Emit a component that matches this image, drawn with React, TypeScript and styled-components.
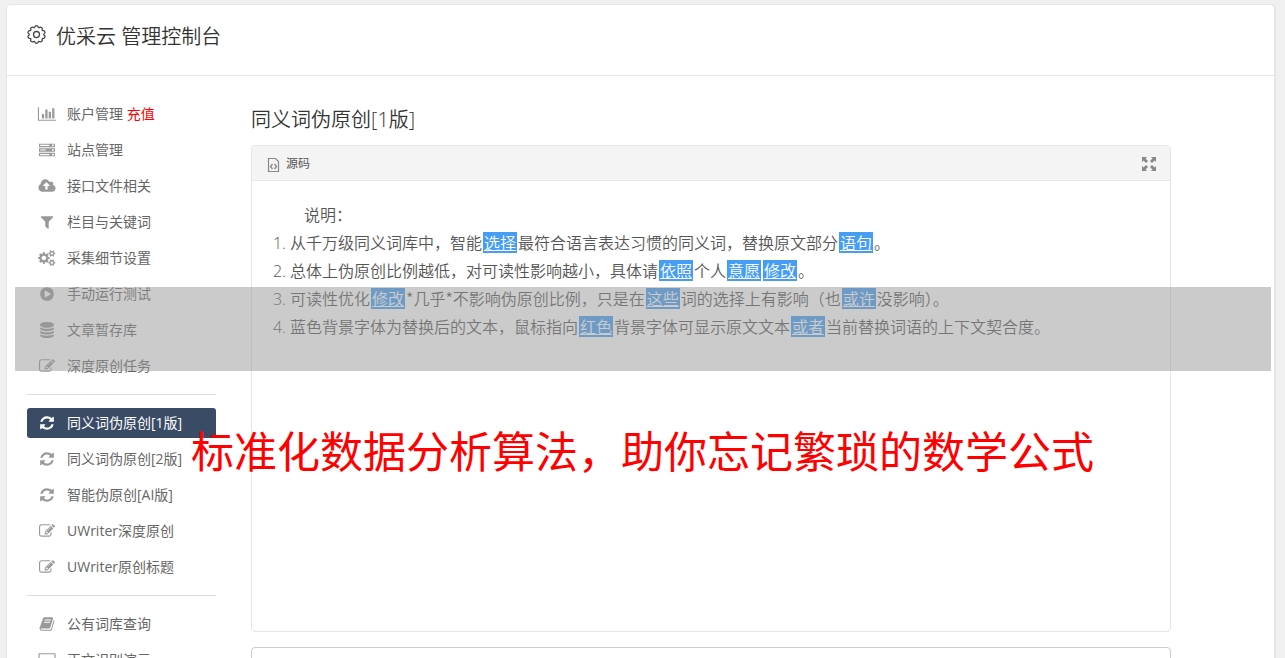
import React from 'react';
import styled, { createGlobalStyle } from 'styled-components';

const latinFirst = '"Open Sans", "Noto Sans CJK SC", sans-serif';
const cjkFirst = '"Noto Sans CJK SC", sans-serif';

const GlobalStyle = createGlobalStyle`
  * { box-sizing: border-box; }
  body {
    margin: 0;
    background: #f0f0f0;
    color: #666;
    font-family: ${latinFirst};
    font-size: 14px;
  }
`;

const Page = styled.div`
  position: relative;
  height: 100vh;
  overflow: hidden;
  padding: 5px 11px 0 7px;
`;

const Card = styled.div`
  min-height: 100vh;
  background: #fff;
  border-radius: 4px;
  box-shadow: 0 0 0 1px #e6e6e6, 1px 0 0 1px #e6e6e6;
`;

const Header = styled.header`
  display: flex;
  align-items: flex-start;
  gap: 10px;
  height: 71px;
  padding: 17px 20px;
  border-bottom: 1px solid #e5e5e5;
  color: #333;
`;

const HeaderIcon = styled.svg`
  width: 19px;
  height: 19px;
  margin-top: 3px;
`;

const Title = styled.h1`
  margin: 0;
  font-size: 20px;
  line-height: 30px;
  font-weight: 350;
`;

const Body = styled.div`
  display: flex;
  gap: 35px;
  padding: 23px 20px 0;
`;

const Sidebar = styled.nav`
  flex: 0 0 189px;
`;

const Divider = styled.hr`
  height: 1px;
  margin: 13px 0;
  border: 0;
  background: #ddd;
`;

const Menu = styled.ul`
  display: flex;
  flex-direction: column;
  gap: 6px;
  margin: 0;
  padding: 0;
  list-style: none;
`;

const MenuLink = styled.a<{ $active?: boolean }>`
  display: flex;
  align-items: center;
  gap: 10px;
  height: 30px;
  padding: 0 10px;
  border-radius: 3px;
  line-height: 20px;
  white-space: pre;
  text-decoration: none;
  color: ${(p) => (p.$active ? '#fff' : '#666')};
  background: ${(p) => (p.$active ? '#3a4b66' : 'transparent')};

  svg {
    flex: none;
    width: 20px;
    height: 16px;
    fill: ${(p) => (p.$active ? '#fff' : '#999')};
  }
`;

const Recharge = styled.span`
  color: #f00;
`;

const Main = styled.main`
  flex: 0 1 920px;
  min-width: 0;
`;

const SectionTitle = styled.h2`
  margin: 6px 0 10px;
  font-size: 20px;
  line-height: 30px;
  font-weight: 350;
  color: #333;
`;

const Editor = styled.section`
  border: 1px solid #e5e5e5;
  border-radius: 4px;
`;

const Toolbar = styled.div`
  display: flex;
  align-items: center;
  justify-content: space-between;
  height: 35px;
  padding: 2px 14px 0;
  border-bottom: 1px solid #e5e5e5;
  border-radius: 3px 3px 0 0;
  background: #f4f4f4;
`;

const ToolButton = styled.button`
  display: flex;
  align-items: center;
  gap: 6px;
  padding: 0;
  border: 0;
  background: none;
  color: #555;
  font-family: ${latinFirst};
  font-size: 12px;
  line-height: 18px;
`;

const Article = styled.div`
  min-height: 450px;
  padding: 19px 20px;
  font-family: ${cjkFirst};
  font-size: 16px;
  font-weight: 350;
  line-height: 28px;
  color: #555;
`;

const Lead = styled.p`
  margin: 0;
  text-indent: 2em;
`;

const Notes = styled.ol`
  margin: 0;
  padding-left: 18px;

  li::marker {
    font-family: ${latinFirst};
  }
`;

const Swap = styled.u`
  display: inline-block;
  height: 21px;
  margin: 0 1px;
  padding: 0 1px;
  line-height: 21px;
  color: #fff;
  background: #459df5;
`;

const Source = styled.textarea`
  display: block;
  width: 100%;
  height: 120px;
  margin-top: 15px;
  border: 1px solid #ccc;
  border-radius: 4px;
  resize: none;
`;

const Band = styled.div`
  position: absolute;
  top: 287px;
  left: 15px;
  right: 14px;
  height: 84px;
  background: rgba(151, 151, 151, 0.5);
`;

const Slogan = styled.p`
  position: absolute;
  top: 417px;
  left: 0;
  right: 0;
  margin: 0;
  text-align: center;
  white-space: nowrap;
  font-family: ${cjkFirst};
  font-size: 43px;
  line-height: 64px;
  color: #f00;
`;

const paths = {
  cloud:
    'M1216 864q0-14-9-23l-352-352q-9-9-23-9t-23 9l-351 351q-10 12-10 24 0 14 9 23t23 9h224v352q0 13 9.5 22.5t22.5 9.5h192q13 0 22.5-9.5t9.5-22.5v-352h224q13 0 22.5-9.5t9.5-22.5zm640 288q0 159-112.5 271.5t-271.5 112.5h-1088q-185 0-316.5-131.5t-131.5-316.5q0-130 70-240t188-165q-2-30-2-43 0-212 150-362t362-150q156 0 285.5 87t188.5 231q71-62 166-62 106 0 181 75t75 181q0 76-41 138 130 31 213.5 135.5t83.5 238.5z',
  filter:
    'M1595 295q17 41-14 70l-493 493v742q0 42-39 59-13 5-25 5-27 0-45-19l-256-256q-19-19-19-45v-486l-493-493q-31-29-14-70 17-39 59-39h1280q42 0 59 39z',
  cogs:
    'M832 896q0-106-75-181t-181-75-181 75-75 181 75 181 181 75 181-75 75-181zm768 512q0-52-38-90t-90-38-90 38-38 90q0 53 37.5 90.5t90.5 37.5 90.5-37.5 37.5-90.5zm0-1024q0-52-38-90t-90-38-90 38-38 90q0 53 37.5 90.5t90.5 37.5 90.5-37.5 37.5-90.5zm-384 421v185q0 10-7 19.5t-16 10.5l-155 24q-11 35-32 76 34 48 90 115 7 11 7 20 0 12-7 19-23 30-82.5 89.5t-78.5 59.5q-11 0-21-7l-115-90q-37 19-77 31-11 108-23 155-7 24-30 24h-186q-11 0-20-7.5t-10-17.5l-23-153q-34-10-75-31l-118 89q-7 7-20 7-11 0-21-8-144-133-144-160 0-9 7-19 10-14 41-53t47-61q-23-44-35-82l-152-24q-10-1-17-9.5t-7-19.5v-185q0-10 7-19.5t16-10.5l155-24q11-35 32-76-34-48-90-115-7-11-7-20 0-12 7-20 22-30 82-89t79-59q11 0 21 7l115 90q34-18 77-32 11-108 23-154 7-24 30-24h186q11 0 20 7.5t10 17.5l23 153q34 10 75 31l118-89q8-7 20-7 11 0 21 8 144 133 144 160 0 8-7 19-12 16-42 54t-45 60q23 48 34 82l152 23q10 2 17 10.5t7 19.5zm640 533v140q0 16-149 31-12 27-30 52 51 113 51 138 0 4-4 7-122 71-124 71-8 0-46-47t-52-68q-20 2-30 2t-30-2q-14 21-52 68t-46 47q-2 0-124-71-4-3-4-7 0-25 51-138-18-25-30-52-149-15-149-31v-140q0-16 149-31 13-29 30-52-51-113-51-138 0-4 4-7 4-2 35-20t59-34 30-16q8 0 46 46.5t52 67.5q20-2 30-2t30 2q51-71 92-112l6-2q4 0 124 70 4 3 4 7 0 25-51 138 17 23 30 52 149 15 149 31zm0-1024v140q0 16-149 31-12 27-30 52 51 113 51 138 0 4-4 7-122 71-124 71-8 0-46-47t-52-68q-20 2-30 2t-30-2q-14 21-52 68t-46 47q-2 0-124-71-4-3-4-7 0-25 51-138-18-25-30-52-149-15-149-31v-140q0-16 149-31 13-29 30-52-51-113-51-138 0-4 4-7 4-2 35-20t59-34 30-16q8 0 46 46.5t52 67.5q20-2 30-2t30 2q51-71 92-112l6-2q4 0 124 70 4 3 4 7 0 25-51 138 17 23 30 52 149 15 149 31z',
  play:
    'M896 128q209 0 385.5 103t279.5 279.5 103 385.5-103 385.5-279.5 279.5-385.5 103-385.5-103-279.5-279.5-103-385.5 103-385.5 279.5-279.5 385.5-103zm384 823q32-18 32-55t-32-55l-544-320q-31-19-64-1-32 19-32 56v640q0 37 32 56 16 8 32 8 17 0 32-9z',
  database:
    'M896 768q237 0 443-43t325-127v170q0 69-103 128t-280 93.5-385 34.5-385-34.5-280-93.5-103-128v-170q119 84 325 127t443 43zm0 768q237 0 443-43t325-127v170q0 69-103 128t-280 93.5-385 34.5-385-34.5-280-93.5-103-128v-170q119 84 325 127t443 43zm0-384q237 0 443-43t325-127v170q0 69-103 128t-280 93.5-385 34.5-385-34.5-280-93.5-103-128v-170q119 84 325 127t443 43zm0-1152q208 0 385 34.5t280 93.5 103 128v128q0 69-103 128t-280 93.5-385 34.5-385-34.5-280-93.5-103-128v-128q0-69 103-128t280-93.5 385-34.5z',
  edit:
    'M888 1184l116-116-152-152-116 116v56h96v96h56zm440-720q-16-16-33 1l-350 350q-17 17-1 33t33-1l350-350q17-17 1-33zm80 594v190q0 119-84.5 203.5t-203.5 84.5h-832q-119 0-203.5-84.5t-84.5-203.5v-832q0-119 84.5-203.5t203.5-84.5h832q63 0 117 25 15 7 18 23 3 17-9 29l-49 49q-14 14-32 8-23-6-45-6h-832q-66 0-113 47t-47 113v832q0 66 47 113t113 47h832q66 0 113-47t47-113v-126q0-13 9-22l64-64q15-15 35-7t20 29zm-96-738l288 288-672 672h-288v-288zm444 132l-92 92-288-288 92-92q28-28 68-28t68 28l152 152q28 28 28 68t-28 68z',
  refresh:
    'M1639 1056q0 5-1 7-64 268-268 434.5t-478 166.5q-146 0-282.5-55t-243.5-157l-129 129q-19 19-45 19t-45-19-19-45v-448q0-26 19-45t45-19h448q26 0 45 19t19 45-19 45l-137 137q71 66 161 102t187 36q134 0 250-65t186-179q11-17 53-117 8-23 30-23h192q13 0 22.5 9.5t9.5 22.5zm25-800v448q0 26-19 45t-45 19h-448q-26 0-45-19t-19-45 19-45l138-138q-148-137-349-137-134 0-250 65t-186 179q-11 17-53 117-8 23-30 23h-199q-13 0-22.5-9.5t-9.5-22.5v-7q65-268 270-434.5t480-166.5q146 0 284 55.5t245 156.5l130-129q19-19 45-19t45 19 19 45z',
  book:
    'M1703 478q40 57 18 129l-275 906q-19 64-76.5 107.5t-122.5 43.5h-923q-77 0-148.5-53.5t-99.5-131.5q-24-67-2-127 0-4 3-27t4-37q1-8-3-21.5t-3-19.5q2-11 8-21t16.5-23.5 16.5-23.5q23-38 45-91.5t30-91.5q3-10 .5-30t-.5-28q3-11 17-28t17-23q21-36 42-92t25-90q1-9-2.5-32t.5-28q4-13 22-30.5t22-22.5q19-26 42.5-84.5t27.5-96.5q1-8-3-25.5t-2-26.5q2-8 9-18t18-23 17-21q8-12 16.5-30.5t15-35 16-36 19.5-32 26.5-23.5 36-11.5 47.5 5.5l-1 3q38-9 51-9h761q74 0 114 56t18 130l-274 906q-36 119-71.5 153.5t-128.5 34.5h-869q-27 0-38 15-11 16-1 43 24 70 144 70h923q29 0 56-15.5t35-41.5l300-987q7-22 5-57 38 15 59 43zm-1064 2q-4 13 2 22.5t20 9.5h608q13 0 25.5-9.5t16.5-22.5l21-64q4-13-2-22.5t-20-9.5h-608q-13 0-25.5 9.5t-16.5 22.5zm-83 256q-4 13 2 22.5t20 9.5h608q13 0 25.5-9.5t16.5-22.5l21-64q4-13-2-22.5t-20-9.5h-608q-13 0-25.5 9.5t-16.5 22.5z',
  chart:
    'M576 768v512h-256v-512h256zm384-512v1024h-256v-1024h256zm960 1152v128h-2048v-1536h128v1408h1920zm-576-896v768h-256v-768h256zm384-384v1152h-256v-1152h256z',
  server:
    'M0 256h1792v384h-1792zM128 384v128h1024v-128zM1472 352v192h192v-192zM0 768h1792v384h-1792zM128 896v128h640v-128zM1472 864v192h192v-192zM0 1280h1792v384h-1792zM128 1408v128h1024v-128zM1472 1376v192h192v-192z',
  screen:
    'M96 128h1728q96 0 96 96v1120q0 96-96 96h-1728q-96 0-96-96v-1120q0-96 96-96zM128 256v1056h1664v-1056z',
};

type IconName = keyof typeof paths;

const boxes: Partial<Record<IconName, string>> = {
  chart: '-128 -128 2048 1792',
  cloud: '-64 0 1920 1792',
  cogs: '0 0 1856 1792',
  screen: '0 0 1920 1792',
  server: '0 64 1792 1792',
};

const Icon = ({ name }: { name: IconName }) => (
  <svg viewBox={boxes[name] ?? '0 0 1792 1792'} aria-hidden="true">
    <path fillRule={name === 'server' || name === 'screen' ? 'evenodd' : 'nonzero'} d={paths[name]} />
  </svg>
);

type Entry = { icon: IconName; label: string; extra?: string; active?: boolean };

const groups: Entry[][] = [
  [
    { icon: 'chart', label: '账户管理', extra: '充值' },
    { icon: 'server', label: '站点管理' },
    { icon: 'cloud', label: '接口文件相关' },
    { icon: 'filter', label: '栏目与关键词' },
    { icon: 'cogs', label: '采集细节设置' },
    { icon: 'play', label: '手动运行测试' },
    { icon: 'database', label: '文章暂存库' },
    { icon: 'edit', label: '深度原创任务' },
  ],
  [
    { icon: 'refresh', label: '同义词伪原创[1版]', active: true },
    { icon: 'refresh', label: '同义词伪原创[2版]' },
    { icon: 'refresh', label: '智能伪原创[AI版]' },
    { icon: 'edit', label: 'UWriter深度原创' },
    { icon: 'edit', label: 'UWriter原创标题' },
  ],
  [
    { icon: 'book', label: '公有词库查询' },
    { icon: 'screen', label: '正文识别演示' },
  ],
];

// Ten rounded lobes around a ring, in a 24-unit box.
const gearOutline = (() => {
  const point = (radius: number, degrees: number) => {
    const a = (degrees * Math.PI) / 180;
    return `${(12 + radius * Math.sin(a)).toFixed(2)} ${(12 - radius * Math.cos(a)).toFixed(2)}`;
  };
  let d = `M${point(10.6, -9)}`;
  for (let i = 0; i < 10; i += 1) {
    const a = i * 36;
    d += `Q${point(11.8, a)} ${point(10.6, a + 9)}Q${point(7.6, a + 18)} ${point(10.6, a + 27)}`;
  }
  return `${d}Z`;
})();

export default function App() {
  return (
    <Page>
      <GlobalStyle />
      <Card>
        <Header>
          <HeaderIcon viewBox="0 0 24 24" fill="none" stroke="#444" strokeWidth="1.6" aria-hidden="true">
            <path d={gearOutline} />
            <circle cx="12" cy="12" r="3.8" />
          </HeaderIcon>
          <Title>优采云 管理控制台</Title>
        </Header>
        <Body>
          <Sidebar>
            {groups.map((group, index) => (
              <React.Fragment key={index}>
                {index > 0 && <Divider />}
                <Menu>
                  {group.map((entry) => (
                    <li key={entry.label}>
                      <MenuLink href="#" $active={entry.active}>
                        <Icon name={entry.icon} />
                        <span>
                          {entry.label}
                          {entry.extra && <Recharge> {entry.extra}</Recharge>}
                        </span>
                      </MenuLink>
                    </li>
                  ))}
                </Menu>
              </React.Fragment>
            ))}
          </Sidebar>
          <Main>
            <SectionTitle>同义词伪原创[1版]</SectionTitle>
            <Editor>
              <Toolbar>
                <ToolButton type="button">
                  <svg width="14" height="16" viewBox="0 0 14 16" fill="none" stroke="#888" aria-hidden="true">
                    <path d="M2.5 2.5h7l3 3v10h-10z" strokeWidth="1.2" />
                    <path d="M6.5 8l-2 2.500 2 2.500M8.500 8l2 2.500-2 2.500" strokeWidth="1.300" />
                  </svg>
                  源码
                </ToolButton>
                <ToolButton type="button" aria-label="全屏">
                  <svg width="14" height="14" viewBox="0 0 14 14" fill="#888" aria-hidden="true">
                    <path d="M0 0h5L3.500 1.500 6 4 4 6 1.500 3.500 0 5zM14 0v5l-1.500-1.500L10 6 8 4l2.500-2.500L9 0zM0 14V9l1.500 1.500L4 8l2 2-2.500 2.500L5 14zM14 14H9l1.500-1.500L8 10l2-2 2.500 2.500L14 9z" />
                  </svg>
                </ToolButton>
              </Toolbar>
              <Article>
                <Lead>说明：</Lead>
                <Notes>
                  <li>
                    从千万级同义词库中，智能<Swap>选择</Swap>最符合语言表达习惯的同义词，替换原文部分<Swap>语句</Swap>。
                  </li>
                  <li>
                    总体上伪原创比例越低，对可读性影响越小，具体请<Swap>依照</Swap>个人<Swap>意愿</Swap><Swap>修改</Swap>。
                  </li>
                  <li>
                    可读性优化<Swap>修改</Swap>*几乎*不影响伪原创比例，只是在<Swap>这些</Swap>词的选择上有影响（也<Swap>或许</Swap>没影响）。
                  </li>
                  <li>
                    蓝色背景字体为替换后的文本，鼠标指向<Swap>红色</Swap>背景字体可显示原文文本<Swap>或者</Swap>当前替换词语的上下文契合度。
                  </li>
                </Notes>
              </Article>
            </Editor>
            <Source aria-label="原文内容" />
          </Main>
        </Body>
      </Card>
      <Band />
      <Slogan>标准化数据分析算法，助你忘记繁琐的数学公式</Slogan>
    </Page>
  );
}
